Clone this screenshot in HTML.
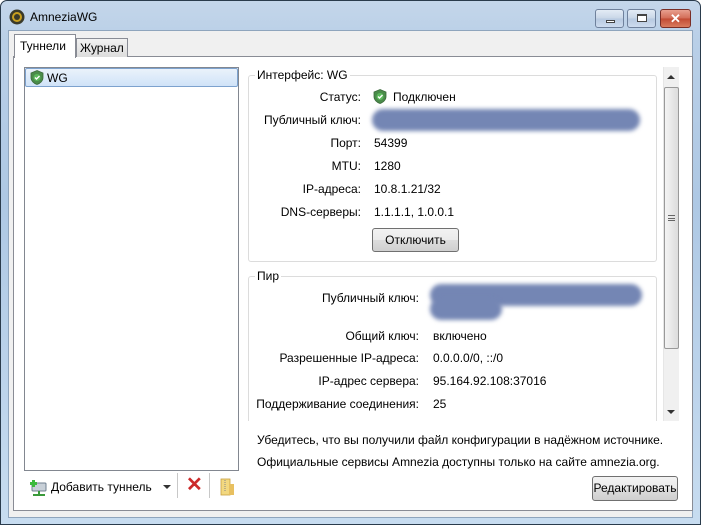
<!DOCTYPE html>
<html><head><meta charset="utf-8"><style>
*{box-sizing:border-box;margin:0;padding:0}
body{width:701px;height:525px;overflow:hidden;background:#fff;font-family:"Liberation Sans",sans-serif;font-size:12px;color:#000;position:relative}
.a{position:absolute}
.frame{left:0;top:0;width:701px;height:525px;border:1px solid #2a3b4c;border-radius:7px 7px 0 0;background:linear-gradient(180deg,#c4d6ea 0,#b9cfe7 40px,#aec8e4 200px,#c7dcf0 520px)}
.client{left:8px;top:30px;width:685px;height:488px;background:#f0f0f0;border:1px solid #8fa5bd}
.pane{left:13px;top:56px;width:680px;height:455px;background:#fff;border:1px solid #898c95}
.tab{border:1px solid #898c95;border-bottom:none;background:linear-gradient(#f2f2f2,#dcdcdc)}
.list{left:24px;top:67px;width:215px;height:404px;border:1px solid #828790;background:#fff}
.sel{left:25px;top:68px;width:213px;height:19px;border:1px solid #7da2ce;border-radius:2px;background:linear-gradient(#eaf2fb,#d0e3f8)}
.grp{border:1px solid #dcdcdc;border-radius:3px}
.gt{background:#fff;padding:0 2px}
.lbl{text-align:right}
.btn{border:1px solid #707070;border-radius:3px;background:linear-gradient(#f2f2f2 0,#ebebeb 50%,#dddddd 51%,#cfcfcf);text-align:center;line-height:22px}
.blur{background:#7486b4;border-radius:12px;filter:blur(2px)}
.wb{top:9px;height:19px;border:1px solid #6f819c;border-radius:3px;background:linear-gradient(#e3ebf5,#c8d6e7 50%,#b7c9e0 51%,#cddbee)}
</style></head><body>
<div class="a frame"></div>
<!-- title -->
<svg class="a" style="left:9px;top:9px" width="16" height="16" viewBox="0 0 16 16"><circle cx="8" cy="8" r="7.5" fill="#3a3a2a"/><circle cx="8" cy="8" r="5" fill="#c8a020"/><circle cx="8" cy="8" r="3" fill="#3a3a2a"/></svg>
<div class="a" style="left:30px;top:10px;font-size:12px">AmneziaWG</div>
<div class="a wb" style="left:595px;width:29px"><div class="a" style="left:10px;top:10px;width:9px;height:3px;border:1px solid #444;background:#fff"></div></div>
<div class="a wb" style="left:627px;width:29px"><div class="a" style="left:9px;top:4px;width:10px;height:8px;border:1px solid #444;border-top-width:2px;background:#fff"></div></div>
<div class="a" style="left:660px;top:9px;width:31px;height:19px;border:1px solid #7a2e26;border-radius:3px;background:linear-gradient(#e8a08f,#d26b55 50%,#c24a33 51%,#d97b5e);color:#fff;font-weight:bold;font-size:13px;text-align:center;line-height:17px">✕</div>
<div class="a client"></div>
<div class="a pane"></div>
<div class="a tab" style="left:76px;top:38px;width:52px;height:19px"></div>
<div class="a" style="left:80px;top:41px">Журнал</div>
<div class="a" style="left:14px;top:34px;width:62px;height:24px;background:#fff;border:1px solid #898c95;border-bottom:none"></div>
<div class="a" style="left:20px;top:39px">Туннели</div>
<!-- list -->
<div class="a list"></div>
<div class="a sel"></div>
<svg class="a" style="left:30px;top:70px" width="14" height="15" viewBox="0 0 14 15"><path d="M7 0.5L13 3v4.5c0 3.5-3 6-6 7-3-1-6-3.5-6-7V3z" fill="#4a8c4a" stroke="#3a6a3a" stroke-width=".8"/><circle cx="7" cy="7.5" r="3.5" fill="#5bb85b"/><path d="M5 7.5l1.5 1.5 3-3" stroke="#fff" stroke-width="1.4" fill="none"/></svg>
<div class="a" style="left:47px;top:71px">WG</div>
<!-- toolbar -->
<svg class="a" style="left:30px;top:479px" width="18" height="18" viewBox="0 0 18 18"><rect x="2" y="4" width="14" height="8" rx="1" fill="#c8d0d8" stroke="#708090"/><rect x="8" y="12" width="2" height="3" fill="#3a9a3a"/><rect x="3" y="15" width="12" height="2" fill="#3a9a3a"/><path d="M2 1h3v2h2v3H5v2H2V6H0V3h2z" fill="#3cba3c" transform="translate(0,0)"/></svg>
<div class="a" style="left:51px;top:480px">Добавить туннель</div>
<div class="a" style="left:163px;top:485px;width:0;height:0;border-left:4px solid transparent;border-right:4px solid transparent;border-top:4px solid #333"></div>
<div class="a" style="left:177px;top:473px;width:1px;height:25px;background:#c8c8c8"></div>
<div class="a" style="left:186px;top:475px;color:#cc2a2a;font-size:20px;font-weight:bold;line-height:20px">✕</div>
<div class="a" style="left:209px;top:473px;width:1px;height:25px;background:#c8c8c8"></div>
<svg class="a" style="left:219px;top:478px" width="16" height="18" viewBox="0 0 16 18"><rect x="2" y="1" width="9" height="16" fill="#f2d880" stroke="#c8a040" stroke-width=".8"/><rect x="10" y="6" width="5" height="11" fill="#e8c060"/><path d="M6 2v12" stroke="#888" stroke-dasharray="1 1"/></svg>
<!-- interface group -->
<div class="a grp" style="left:248px;top:75px;width:409px;height:187px"></div>
<div class="a gt" style="left:255px;top:68px">Интерфейс: WG</div>
<div class="a lbl" style="left:250px;top:90px;width:111px">Статус:</div>
<svg class="a" style="left:373px;top:89px" width="14" height="15" viewBox="0 0 14 15"><path d="M7 0.5L13 3v4.5c0 3.5-3 6-6 7-3-1-6-3.5-6-7V3z" fill="#4a8c4a" stroke="#3a6a3a" stroke-width=".8"/><circle cx="7" cy="7.5" r="3.5" fill="#5bb85b"/><path d="M5 7.5l1.5 1.5 3-3" stroke="#fff" stroke-width="1.4" fill="none"/></svg>
<div class="a" style="left:393px;top:90px">Подключен</div>
<div class="a lbl" style="left:250px;top:113px;width:111px">Публичный ключ:</div>
<div class="a blur" style="left:372px;top:109px;width:268px;height:22px"></div>
<div class="a lbl" style="left:250px;top:136px;width:111px">Порт:</div><div class="a" style="left:374px;top:136px">54399</div>
<div class="a lbl" style="left:250px;top:159px;width:111px">MTU:</div><div class="a" style="left:374px;top:159px">1280</div>
<div class="a lbl" style="left:250px;top:182px;width:111px">IP-адреса:</div><div class="a" style="left:374px;top:182px">10.8.1.21/32</div>
<div class="a lbl" style="left:250px;top:205px;width:111px">DNS-серверы:</div><div class="a" style="left:374px;top:205px">1.1.1.1, 1.0.0.1</div>
<div class="a btn" style="left:372px;top:228px;width:87px;height:24px">Отключить</div>
<!-- peer group -->
<div class="a grp" style="left:248px;top:276px;width:409px;height:160px"></div>
<div class="a gt" style="left:255px;top:269px">Пир</div>
<div class="a lbl" style="left:250px;top:291px;width:169px">Публичный ключ:</div>
<div class="a blur" style="left:430px;top:284px;width:212px;height:22px"></div>
<div class="a blur" style="left:430px;top:298px;width:72px;height:22px"></div>
<div class="a lbl" style="left:250px;top:329px;width:169px">Общий ключ:</div><div class="a" style="left:433px;top:329px">включено</div>
<div class="a lbl" style="left:250px;top:351px;width:169px">Разрешенные IP-адреса:</div><div class="a" style="left:433px;top:351px">0.0.0.0/0, ::/0</div>
<div class="a lbl" style="left:250px;top:374px;width:169px">IP-адрес сервера:</div><div class="a" style="left:433px;top:374px">95.164.92.108:37016</div>
<div class="a lbl" style="left:250px;top:397px;width:169px">Поддерживание соединения:</div><div class="a" style="left:433px;top:397px">25</div>
<div class="a" style="left:244px;top:421px;width:440px;height:16px;background:#fff"></div>
<!-- scrollbar -->
<div class="a" style="left:663px;top:67px;width:16px;height:354px;background:#f0f0f0;border-left:1px solid #e6e6e6"></div>
<div class="a" style="left:667px;top:75px;width:0;height:0;border-left:4px solid transparent;border-right:4px solid transparent;border-bottom:4px solid #333"></div>
<div class="a" style="left:664px;top:87px;width:15px;height:262px;border:1px solid #999;border-radius:2px;background:linear-gradient(90deg,#f4f4f4,#dcdcdc)"></div>
<div class="a" style="left:668px;top:215px;width:7px;height:6px;border-top:1px solid #666;border-bottom:1px solid #666"><div style="margin-top:2px;height:1px;background:#666"></div></div>
<div class="a" style="left:667px;top:410px;width:0;height:0;border-left:4px solid transparent;border-right:4px solid transparent;border-top:4px solid #333"></div>
<!-- notes -->
<div class="a" style="left:257px;top:433px">Убедитесь, что вы получили файл конфигурации в надёжном источнике.</div>
<div class="a" style="left:257px;top:455px">Официальные сервисы Amnezia доступны только на сайте amnezia.org.</div>
<div class="a btn" style="left:592px;top:476px;width:86px;height:25px">Редактировать</div>
</body></html>
